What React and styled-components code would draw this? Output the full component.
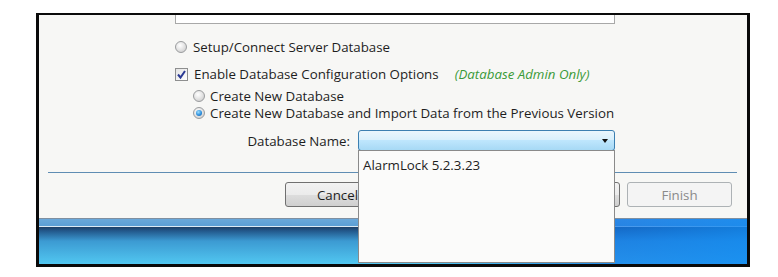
import React from 'react';
import styled, { createGlobalStyle } from 'styled-components';

const GlobalStyle = createGlobalStyle`
  body {
    margin: 0;
    background: #ffffff;
    font-family: "Open Sans", "Noto Sans", sans-serif;
  }
`;

const Frame = styled.div`
  box-sizing: border-box;
  width: 714px;
  height: 254px;
  margin: 13px 0 0 36px;
  border: 3px solid #0a0a0a;
  border-top-width: 2px;
  display: flex;
  flex-direction: column;
`;

const Panel = styled.div`
  height: 203px;
  background: #f7f7f5;
  display: flex;
  flex-direction: column;
  font-size: 13.3px;
  color: #1e1e1e;
`;

const TopBox = styled.div`
  box-sizing: border-box;
  margin-left: 136px;
  width: 440px;
  height: 9px;
  border: 1px solid #a8a8a8;
  border-top: none;
  background: #ffffff;
`;

const Options = styled.div`
  margin-left: 136px;
  margin-top: 14px;
  display: flex;
  flex-direction: column;
`;

const Row = styled.label`
  display: flex;
  align-items: center;
  gap: ${(p) => (p.$gap ? p.$gap : 6)}px;
  height: ${(p) => (p.$h ? p.$h : 18)}px;
  margin-top: ${(p) => p.$mt || 0}px;
  padding-left: ${(p) => p.$indent || 0}px;
  white-space: nowrap;
`;

const Radio = styled.span`
  box-sizing: border-box;
  width: 12px;
  height: 12px;
  border-radius: 50%;
  border: 1px solid #9a9c9e;
  background: radial-gradient(circle at 40% 35%, #ffffff 0%, #e6e6e6 45%, #c4c4c4 100%);
  display: flex;
  align-items: center;
  justify-content: center;
  flex: none;

  &::after {
    content: '';
    display: ${(p) => (p.$checked ? 'block' : 'none')};
    width: 6px;
    height: 6px;
    border-radius: 50%;
    background: radial-gradient(circle at 40% 35%, #9fe0ff 0%, #2d8fdc 55%, #145aa8 100%);
  }
`;

const Check = styled.span`
  box-sizing: border-box;
  width: 13px;
  height: 13px;
  border: 1px solid #8e8f8f;
  background: linear-gradient(135deg, #e4e4e4, #ffffff);
  display: flex;
  flex: none;
`;

const Hint = styled.span`
  margin-left: 10px;
  color: #3a9a38;
  font-style: italic;
`;

const NameRow = styled.div`
  display: flex;
  align-items: center;
  gap: 8px;
  margin: 9px 0 0 136px;
  height: 21px;
`;

const NameLabel = styled.span`
  width: 175px;
  text-align: right;
  white-space: nowrap;
`;

const Combo = styled.div`
  position: relative;
  box-sizing: border-box;
  width: 257px;
  height: 21px;
  border: 1px solid #3c7fb1;
  border-radius: 3px;
  background: linear-gradient(to bottom, #eaf6fd 0%, #d9f0fc 45%, #bee6fd 50%, #a7d9f5 100%);
  display: flex;
  align-items: center;
  justify-content: flex-end;
  padding-right: 6px;
`;

const Arrow = styled.span`
  width: 0;
  height: 0;
  border-left: 3px solid transparent;
  border-right: 3px solid transparent;
  border-top: 4px solid #111111;
`;

const ListBox = styled.div`
  position: absolute;
  top: 100%;
  left: -1px;
  z-index: 10;
  box-sizing: border-box;
  width: 257px;
  height: 113px;
  border: 1px solid #8a8a8a;
  background: #fbfbfa;
  padding: 5px 0 0 4px;
  color: #1e1e1e;
`;

const Separator = styled.div`
  margin: 21px 10px 0 9px;
  height: 1px;
  background: #5f8db3;
`;

const Buttons = styled.div`
  display: flex;
  justify-content: flex-end;
  margin-top: 9px;
  padding-right: 15px;
  gap: 7px;
`;

const Button = styled.button`
  box-sizing: border-box;
  width: 105px;
  height: 25px;
  margin-right: ${(p) => p.$mr || 0}px;
  border-radius: 3px;
  font: inherit;
  font-size: 13.3px;
  padding: 0;
  border: 1px solid ${(p) => (p.disabled ? '#adb2b5' : '#707070')};
  color: ${(p) => (p.disabled ? '#8a8a8a' : '#1e1e1e')};
  background: ${(p) =>
    p.disabled
      ? '#f4f4f4'
      : 'linear-gradient(to bottom, #f2f2f2 0%, #ebebeb 50%, #dddddd 51%, #cfcfcf 100%)'};
`;

const Footer = styled.div`
  flex: 1;
  border-top: 1px solid #7f8fa0;
  background:
    linear-gradient(to right, rgba(0, 0, 0, 0) 55%, rgba(18, 120, 232, 0.7) 80%, rgba(18, 136, 240, 0.85) 100%),
    linear-gradient(to bottom, #6aa8da 0, #5c9fd5 7px, #dceaf4 7px, #dceaf4 8px,
      #1d3f66 8px, #23598c 12px, #3c9ad2 22px, #52c9f2 46px);
`;

function CheckMark() {
  return (
    <svg width="11" height="11" viewBox="0 0 11 11">
      <path d="M2 5.5 L4.5 8.5 L9 2" fill="none" stroke="#2b3a94" strokeWidth="2" />
    </svg>
  );
}

export default function App() {
  return (
    <>
      <GlobalStyle />
      <Frame>
        <Panel>
          <TopBox />
          <Options>
            <Row>
              <Radio />
              Setup/Connect Server Database
            </Row>
            <Row $mt={9}>
              <Check>
                <CheckMark />
              </Check>
              Enable Database Configuration Options
              <Hint>(Database Admin Only)</Hint>
            </Row>
            <Row $mt={4} $h={17} $indent={18} $gap={5}>
              <Radio />
              Create New Database
            </Row>
            <Row $h={17} $indent={18} $gap={5}>
              <Radio $checked />
              Create New Database and Import Data from the Previous Version
            </Row>
          </Options>
          <NameRow>
            <NameLabel>Database Name:</NameLabel>
            <Combo>
              <Arrow />
              <ListBox>AlarmLock 5.2.3.23</ListBox>
            </Combo>
          </NameRow>
          <Separator />
          <Buttons>
            <Button $mr={6}>Cancel</Button>
            <Button>&lt; Back</Button>
            <Button>Next &gt;</Button>
            <Button disabled>Finish</Button>
          </Buttons>
        </Panel>
        <Footer />
      </Frame>
    </>
  );
}
